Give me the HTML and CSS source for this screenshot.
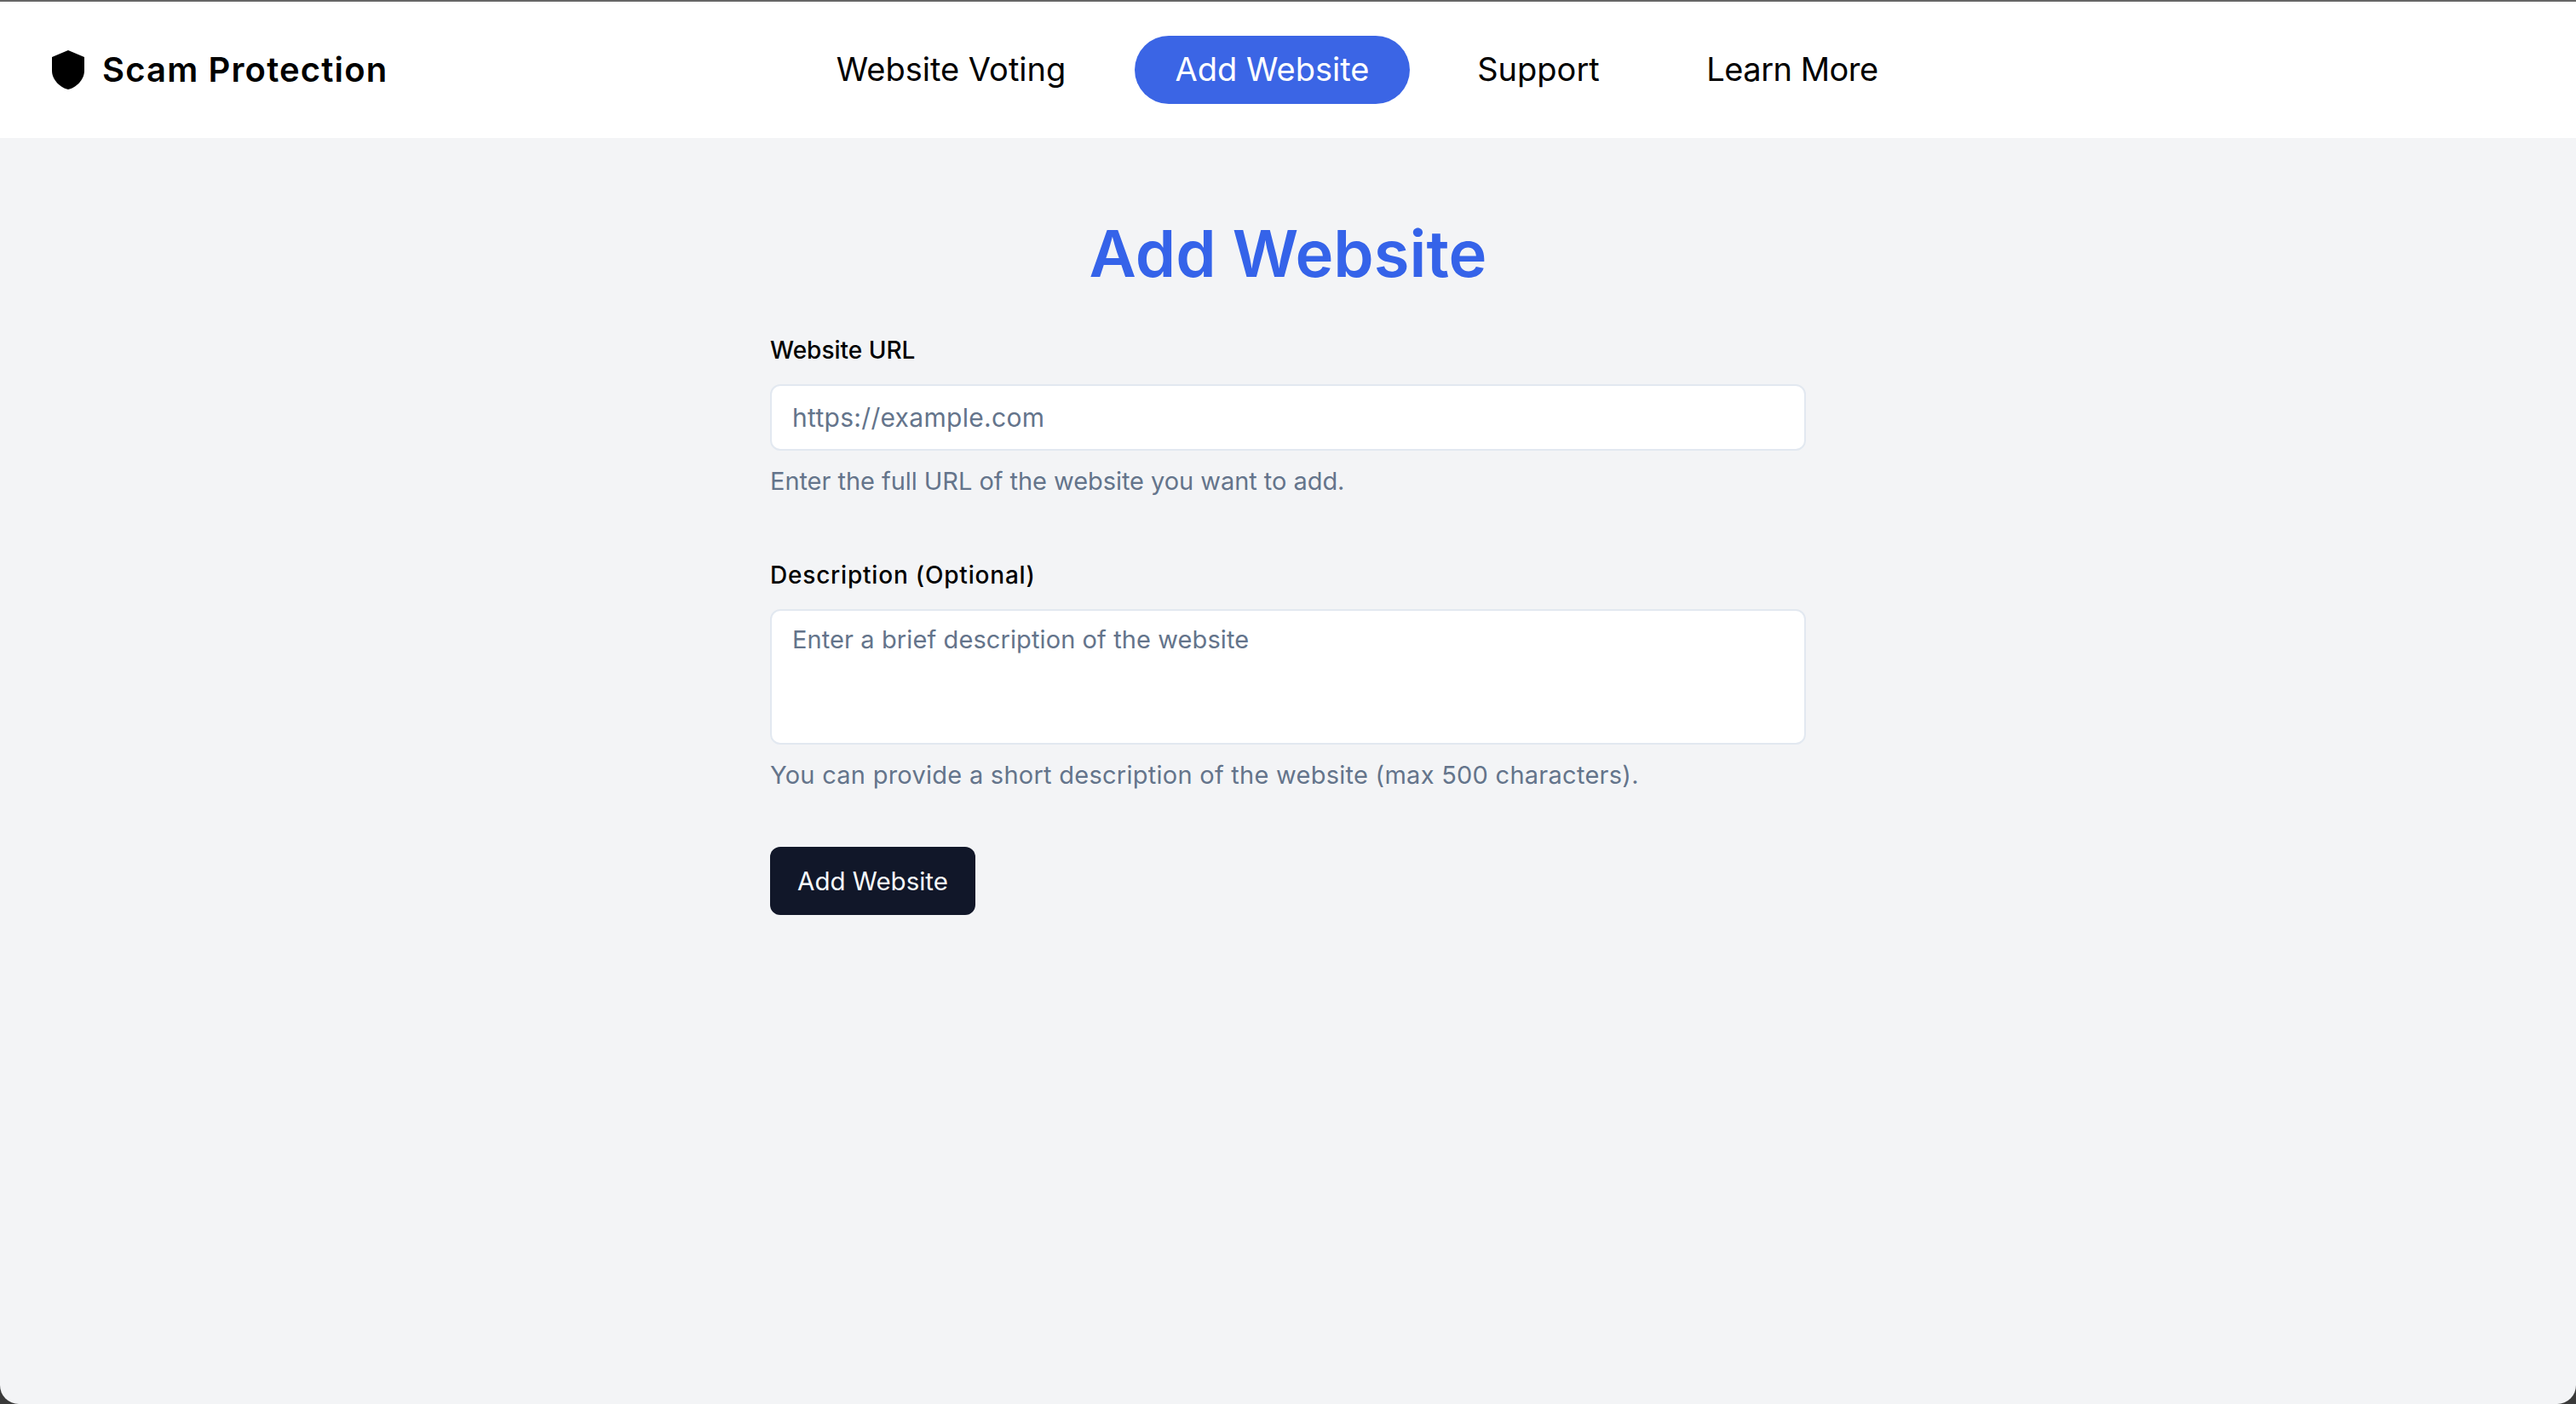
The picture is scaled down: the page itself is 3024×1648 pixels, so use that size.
FILE: index.html
```html
<!DOCTYPE html>
<html lang="en">
<head>
  <meta charset="UTF-8">
  <meta name="viewport" content="width=device-width, initial-scale=1.0">
  <title>Add Website</title>
  <link rel="stylesheet" href="styles.css">
</head>
<body>
  <div class="page">
    <!-- Top navigation -->
    <header class="header">
      <a class="logo">
        <svg class="logo-icon" width="38" height="46" viewBox="0 0 38 46">
          <path d="M19 0 L38 8 V24 C38 35 28 44 19 46 C10 44 0 35 0 24 V8 Z" fill="#000"/>
        </svg>
        <span class="logo-text">Scam Protection</span>
      </a>
      <nav class="nav">
        <a class="nav-link">Website Voting</a>
        <a class="nav-link active">Add Website</a>
        <a class="nav-link">Support</a>
        <a class="nav-link">Learn More</a>
      </nav>
    </header>

    <!-- Form -->
    <main class="main">
      <h1 class="title">Add Website</h1>
      <form class="form">
        <div class="form-group">
          <label class="label" for="url">Website URL</label>
          <input class="field field-url" id="url" type="text" placeholder="https://example.com">
          <p class="hint">Enter the full URL of the website you want to add.</p>
        </div>
        <div class="form-group">
          <label class="label label-long" for="description">Description (Optional)</label>
          <textarea class="field field-area" id="description" placeholder="Enter a brief description of the website"></textarea>
          <p class="hint hint-long">You can provide a short description of the website (max 500 characters).</p>
        </div>
        <button class="submit" type="button">Add Website</button>
      </form>
    </main>
  </div>
</body>
</html>
```

FILE: styles.css
```css
* {
  box-sizing: border-box;
}
html {
  background-color: #3a3a3a;
}
body {
  margin: 0;
  font-family: Inter, "Open Sans", sans-serif;
  color: #000;
}
.page {
  height: 1648px;
  border-top: 2px solid #666;
  border-radius: 0 0 22px 22px;
  background-color: #f3f4f6;
  overflow: hidden;
}
.header {
  display: flex;
  align-items: center;
  height: 160px;
  padding-left: 61px;
  background-color: #fff;
}
.logo {
  display: flex;
  flex: none;
  align-items: center;
  gap: 21px;
  width: 393px;
}
.logo-icon {
  flex: none;
}
.logo-text {
  margin-top: -2px;
  font-size: 40px;
  font-weight: 600;
  letter-spacing: 1.15px;
  white-space: nowrap;
}
.nav {
  display: grid;
  grid-template-columns: 367px 323px 238px 294px;
  gap: 32px;
  margin-left: 479px;
}
.nav-link {
  display: block;
  height: 80px;
  border-radius: 40px;
  font-size: 38px;
  line-height: 79px;
  text-align: center;
  color: #000;
}
.nav-link:last-child {
  letter-spacing: -0.5px;
}
.nav-link.active {
  background-color: #3b65e5;
  color: #fff;
}
.main {
  padding-top: 75px;
}
.title {
  margin: 0 0 34px;
  font-size: 76px;
  font-weight: 600;
  line-height: 120px;
  text-align: center;
  color: #3563e9;
}
.form {
  width: 1216px;
  margin: 0 auto;
}
.form-group {
  margin-bottom: 70px;
}
.form-group:nth-child(2) {
  margin-bottom: 64px;
}
.label {
  display: block;
  margin-bottom: 20px;
  font-size: 28px;
  font-weight: 500;
  line-height: 40px;
}
.label-long {
  letter-spacing: 0.8px;
}
.field {
  display: block;
  width: 100%;
  height: 78px;
  padding: 0 24px;
  border: 2px solid #e2e8f0;
  border-radius: 12px;
  background-color: #fff;
  font-family: inherit;
  font-size: 29px;
  outline: none;
}
.field-url {
  font-size: 30px;
  letter-spacing: 0.3px;
}
.field::placeholder {
  color: #64748b;
  opacity: 1;
}
.field-area {
  height: 159px;
  padding-top: 14px;
  line-height: 40px;
  letter-spacing: 0.1px;
  resize: none;
}
.hint {
  margin: 16px 0 0;
  font-size: 29px;
  line-height: 40px;
  letter-spacing: -0.05px;
  color: #64748b;
}
.hint-long {
  letter-spacing: 0.26px;
}
.submit {
  display: block;
  width: 241px;
  height: 80px;
  padding: 0;
  border: none;
  border-radius: 12px;
  background-color: #111729;
  font-family: inherit;
  font-size: 29.5px;
  color: #f8fafc;
}
```
